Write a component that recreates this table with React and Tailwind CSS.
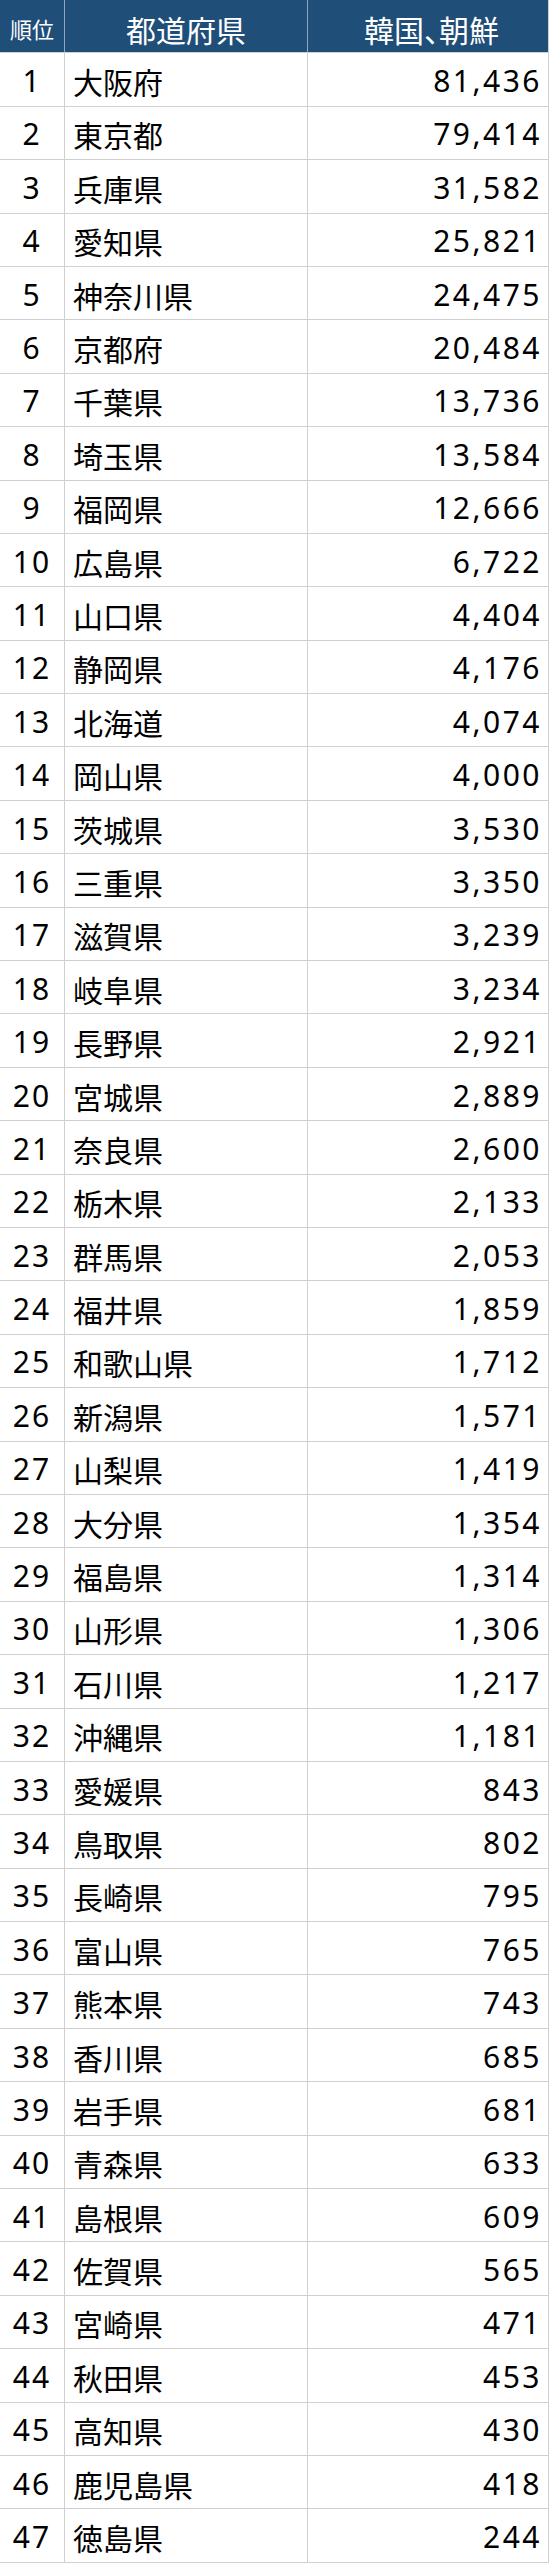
import React from "react";

const data = [
  ["大阪府", "81,436"], ["東京都", "79,414"], ["兵庫県", "31,582"], ["愛知県", "25,821"],
  ["神奈川県", "24,475"], ["京都府", "20,484"], ["千葉県", "13,736"], ["埼玉県", "13,584"],
  ["福岡県", "12,666"], ["広島県", "6,722"], ["山口県", "4,404"], ["静岡県", "4,176"],
  ["北海道", "4,074"], ["岡山県", "4,000"], ["茨城県", "3,530"], ["三重県", "3,350"],
  ["滋賀県", "3,239"], ["岐阜県", "3,234"], ["長野県", "2,921"], ["宮城県", "2,889"],
  ["奈良県", "2,600"], ["栃木県", "2,133"], ["群馬県", "2,053"], ["福井県", "1,859"],
  ["和歌山県", "1,712"], ["新潟県", "1,571"], ["山梨県", "1,419"], ["大分県", "1,354"],
  ["福島県", "1,314"], ["山形県", "1,306"], ["石川県", "1,217"], ["沖縄県", "1,181"],
  ["愛媛県", "843"], ["鳥取県", "802"], ["長崎県", "795"], ["富山県", "765"],
  ["熊本県", "743"], ["香川県", "685"], ["岩手県", "681"], ["青森県", "633"],
  ["島根県", "609"], ["佐賀県", "565"], ["宮崎県", "471"], ["秋田県", "453"],
  ["高知県", "430"], ["鹿児島県", "418"], ["徳島県", "244"],
];

const cjk = "font-['Noto_Sans_CJK_JP',sans-serif]";
const num = "font-['Noto_Sans','Noto_Sans_CJK_JP',sans-serif]";

export default function App() {
  return (
    <div className="w-[549px] bg-white border-r border-[#d0d0d0] text-black">
      <div className="grid grid-cols-[65px_243px_241px] h-[53.4px] bg-[#1f4e79] text-white border-b border-[#d0d0d0]">
        <div className={`flex items-center justify-center border-r border-[#8fa6bf] pt-[4px] text-[22px] leading-none ${cjk}`}>
          順位
        </div>
        <div className={`flex items-center justify-center border-r border-[#8fa6bf] pt-[5px] text-[30px] leading-none ${cjk}`}>
          都道府県
        </div>
        <div className={`flex items-center justify-center pt-[5px] pl-[6px] text-[30px] leading-none ${cjk}`}>
          韓国<span className="[font-feature-settings:'halt']">、</span>朝鮮
        </div>
      </div>
      {data.map(([pref, val], i) => (
        <div
          key={pref}
          className="grid grid-cols-[65px_243px_241px] h-[53.4px] border-b border-[#d0d0d0]"
        >
          <div className={`flex items-center justify-center border-r border-[#d0d0d0] pt-[3px] text-[30px] leading-none tracking-[2px] ${num}`}>
            {i + 1}
          </div>
          <div className={`flex items-center pl-[8px] border-r border-[#d0d0d0] pt-[3px] text-[30px] leading-none ${cjk}`}>
            {pref}
          </div>
          <div className={`flex items-center justify-end pr-[7px] pt-[3px] text-[30px] leading-none tracking-[2.5px] ${num}`}>
            {val}
          </div>
        </div>
      ))}
    </div>
  );
}
